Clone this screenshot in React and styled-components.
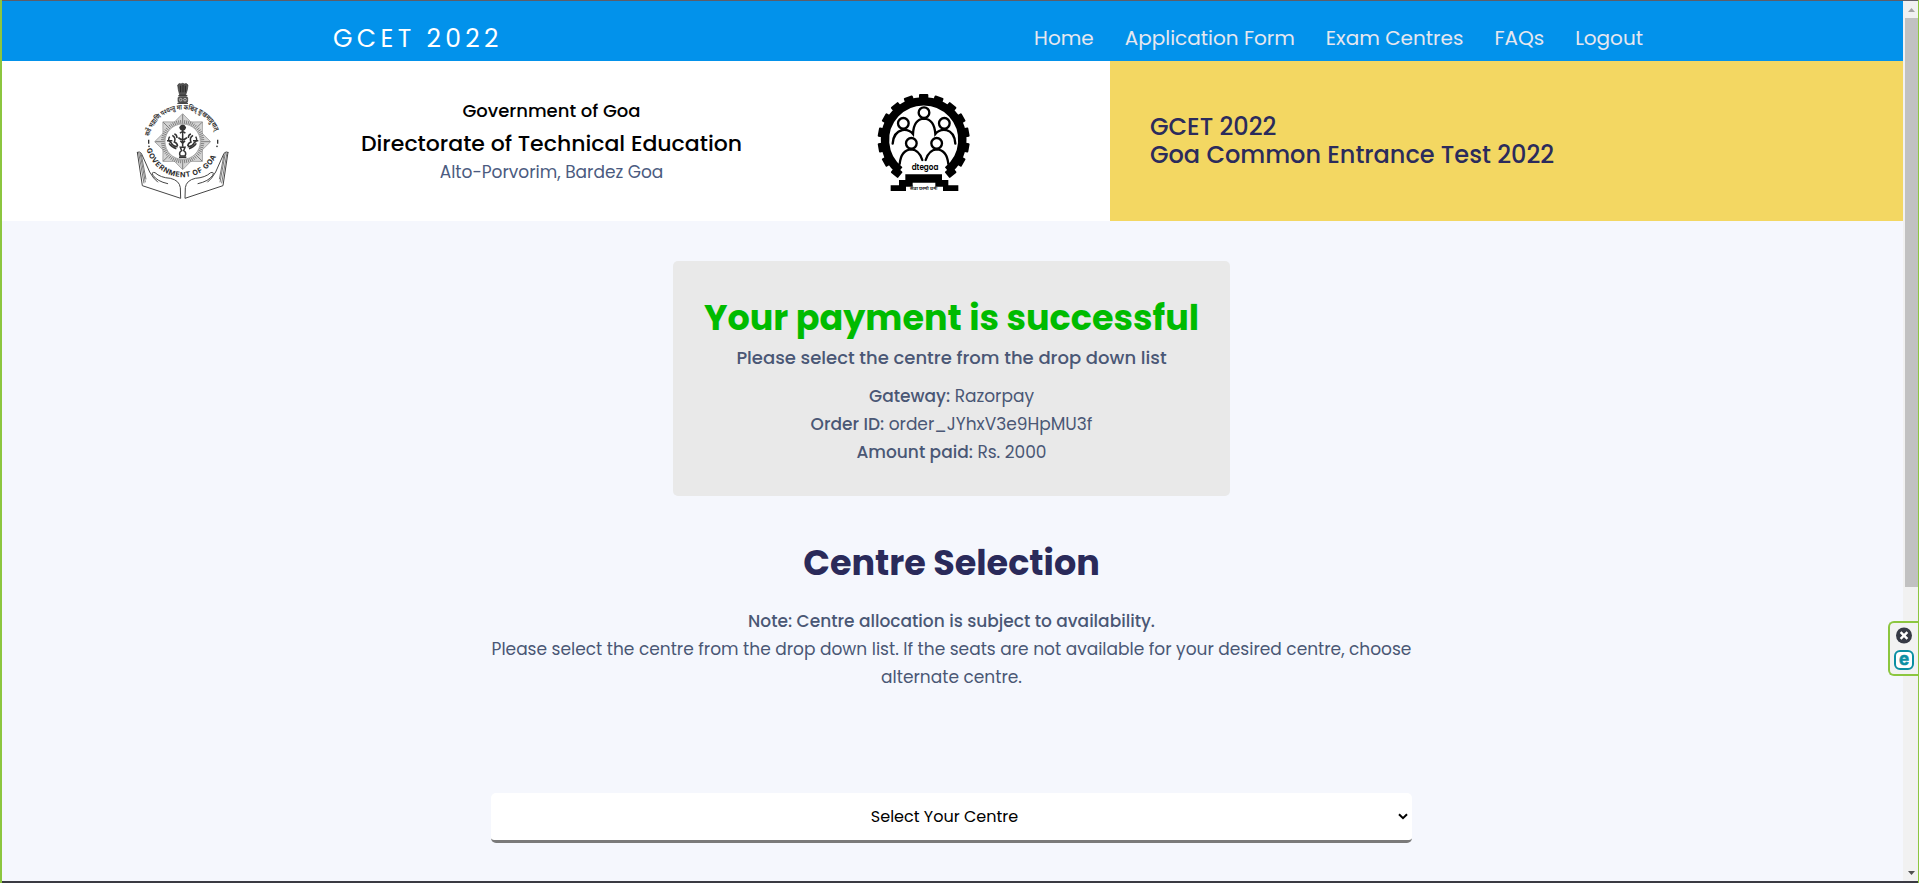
import React from 'react';
import styled, { createGlobalStyle } from 'styled-components';

const GlobalStyle = createGlobalStyle`
  *, *::before, *::after { box-sizing: border-box; }
  body {
    margin: 0;
    overflow: hidden;
    font-family: Poppins, Inter, 'Open Sans', sans-serif;
    color: #4a5775;
  }
  p, h1, h2 { margin: 0; }
`;

const Frame = styled.div`
  display: flex;
  width: 1919px;
  height: 883px;
  position: relative;
  border-left: 2px solid #8cc63f;
  border-right: 1px solid #8cc63f;
`;

const Page = styled.div`
  width: 1901px;
  border-top: 1px solid #5d5d68;
  border-bottom: 2px solid #3a3a42;
  background: #f5f7fd;
`;

const TopBar = styled.header`
  display: flex;
  align-items: flex-start;
  height: 60px;
  padding: 14px 260px 0 331px;
  background: #0292eb;
  line-height: 46px;
`;

const Brand = styled.div`
  flex: 1;
  padding-top: 1px;
  font-size: 25px;
  letter-spacing: 4.35px;
  color: #fff;
`;

const Nav = styled.nav`
  display: flex;
  gap: 31px;
`;

const NavLink = styled.a`
  font-size: 20px;
  color: #e6e7ef;
`;

const Banner = styled.div`
  display: grid;
  grid-template-columns: 1108px 1fr;
  height: 160px;
`;

const Department = styled.div`
  display: grid;
  grid-template-columns: 362px 375px 370px;
  justify-items: center;
  align-items: start;
  background: #fff;
`;

const LogoSlot = styled.div`
  padding-top: ${(p) => p.$top}px;
  line-height: 0;
`;

const DepartmentText = styled.div`
  display: flex;
  flex-direction: column;
  align-items: center;
  width: 375px;
  padding-top: 36px;
`;

const DepartmentLine = styled.p`
  font-size: ${(p) => p.$size}px;
  line-height: ${(p) => p.$line}px;
  font-weight: ${(p) => (p.$muted ? 400 : 500)};
  color: ${(p) => (p.$muted ? '#4b5b80' : '#000')};
  white-space: nowrap;
`;

const ExamTitle = styled.div`
  background: #f3d762;
  padding: 52px 0 0 40px;
  font-size: 24px;
  font-weight: 500;
  line-height: 28px;
  color: #2b2b5c;
`;

const Main = styled.main`
  display: flex;
  flex-direction: column;
  align-items: center;
  padding: 40px 2px 0 0;
`;

const PaymentCard = styled.section`
  display: flex;
  flex-direction: column;
  align-items: center;
  width: 557px;
  height: 235px;
  padding-top: 32px;
  border-radius: 5px;
  background: #e9e9e9;
`;

const CardTitle = styled.h1`
  font-size: 35px;
  line-height: 50px;
  font-weight: 700;
  color: #00bb00;
`;

const CardSubtitle = styled.p`
  margin: 0 0 9px;
  font-size: 18px;
  line-height: 30px;
  font-weight: 500;
`;

const TextRow = styled.p`
  font-size: 17px;
  line-height: 28px;
  text-align: center;
  white-space: nowrap;
`;

const Strong = styled.span`
  font-weight: 500;
`;

const SectionTitle = styled.h2`
  margin: 42px 0 19px;
  font-size: 35px;
  line-height: 50px;
  font-weight: 700;
  color: #2a2a5a;
`;

const Select = styled.button`
  display: flex;
  align-items: center;
  width: 921px;
  height: 50px;
  margin-top: 102px;
  padding: 0 4px 0 0;
  border: 0;
  border-bottom: 3px solid #7a7a7a;
  border-radius: 5px;
  background: #fff;
  font: inherit;
  font-size: 16px;
  color: #000;
`;

const SelectLabel = styled.span`
  flex: 1;
  text-align: center;
`;

const ScrollTrack = styled.div`
  display: flex;
  flex-direction: column;
  width: 15px;
  height: 883px;
  padding-left: 2px;
  border-top: 1px solid #5d5d68;
  border-bottom: 2px solid #3a3a42;
  background: #f1f1f1;
`;

const ScrollThumb = styled.div`
  height: 569px;
  background: #c1c1c1;
`;

const ScrollButton = styled.div`
  display: flex;
  justify-content: center;
  align-items: center;
  height: 17px;
`;

const ScrollSpace = styled.div`
  flex: 1;
`;

const Widget = styled.aside`
  position: absolute;
  right: 0;
  top: 621px;
  width: 30px;
  height: 55px;
  display: flex;
  flex-direction: column;
  align-items: center;
  padding: 4px 0 0;
  gap: 6px;
  border: 2px solid #8cc63f;
  border-right: 0;
  border-radius: 6px 0 0 6px;
  background: #f2f2f2;
`;

const WidgetBadge = styled.div`
  display: flex;
  justify-content: center;
  align-items: center;
  width: 20px;
  height: 20px;
  padding-bottom: 2px;
  border: 2px solid #0a8fa3;
  border-radius: 6px;
  background: #fff;
  color: #0a8fa3;
  font: 700 17px/12px Inter, sans-serif;
  -webkit-text-stroke: 0.6px #0a8fa3;
`;

const polar = (cx, cy, r, deg) => {
  const a = (deg * Math.PI) / 180;
  return [cx + r * Math.sin(a), cy - r * Math.cos(a)];
};

const STAR = Array.from({ length: 16 }, (_, i) =>
  polar(189, 215, i % 2 ? 64 : 84, i * 22.5).join(','),
).join(' ');
const RAYS = Array.from({ length: 64 }, (_, i) => i * 5.625);

function GoaEmblem() {
  return (
    <svg width="100" height="126.67" viewBox="40 30 300 380" fill="none" stroke="#333">
      <g fill="#555" stroke="#333" strokeWidth="2">
        <path d="M174 45q5-7 10-3q5-4 10 0q6-4 11 3l-2 14l-5 16h-18l-4-16z" />
        <rect x="175" y="80" width="29" height="18" rx="5" />
      </g>
      <path d="M183 47v20M190 45v22M197 47v20M176 77h27M173 100h32" strokeWidth="3" stroke="#222" />
      <circle cx="183" cy="89" r="4" stroke="#ddd" strokeWidth="2" />
      <circle cx="196" cy="89" r="4" stroke="#ddd" strokeWidth="2" />
      <defs>
        <path id="mottoArc" d="M89 199A103 103 0 0 1 290 199" />
        <path id="nameArc" d="M80 233A112 112 0 0 0 299 233" />
      </defs>
      <text fill="#333" stroke="none" fontSize="21" fontWeight="700" fontFamily="'Noto Sans Devanagari', 'Noto Sans', sans-serif">
        <textPath href="#mottoArc" textLength="262" lengthAdjust="spacingAndGlyphs">
          सर्वे भद्राणि पश्यन्तु मा कश्चिद् दुःखमाप्नुयात्
        </textPath>
      </text>
      <text fill="#2b2b2b" stroke="none" fontSize="21.5" fontWeight="700" fontFamily="Inter, sans-serif">
        <textPath href="#nameArc" startOffset="4" textLength="272">
          GOVERNMENT OF GOA
        </textPath>
      </text>
      <path d="M87 209v12M294 209v12" strokeWidth="4" />
      <circle cx="88" cy="229" r="2.5" fill="#333" stroke="none" />
      <circle cx="292" cy="229" r="2.5" fill="#333" stroke="none" />
      <polygon points={STAR} fill="#d4d4d4" stroke="#888" strokeWidth="2" />
      {RAYS.map((d) => {
        const [x1, y1] = polar(189, 215, 54, d);
        const [x2, y2] = polar(189, 215, d % 45 === 0 ? 82 : 65, d);
        return <line key={d} x1={x1} y1={y1} x2={x2} y2={y2} stroke="#555" strokeWidth="2" />;
      })}
      <circle cx="189" cy="215" r="53" fill="#fff" stroke="#888" strokeWidth="2" />
      <g strokeWidth="4.5">
        <path d="M189 180v50M181 190q8-10 16 0M176 203q13 12 26 0M182 212l7 8l7-8" />
        <path d="M150 200q-8 12 4 18q6 12 20 12M142 212h16M158 196q12 8 6 20q8 2 10 12M170 236q-14-4-22-16M164 192q8 2 8 12" />
        <path d="M228 200q8 12-4 18q-6 12-20 12M236 212h-16M220 196q-12 8-6 20q-8 2-10 12M208 236q14-4 22-16M214 192q-8 2-8 12" />
        <path d="M181 172q8-12 16 0q-2 8-8 8q-6 0-8-8z" fill="#333" />
        <path d="M182 232h14l-4 10q10 6 4 16h-14q-6-10 4-16z" />
        <path d="M178 262h22" strokeWidth="5" />
      </g>
      <g strokeWidth="3" strokeLinejoin="round" strokeLinecap="round" stroke="#444">
        <path d="M53 247l15 100l115 38l-1-32q-3-22-30-28q-30-2-46-17q-12-3-6 8q12 18 44 25" />
        <path d="M53 247q6-4 12 3l17 38q6 18 20 36l12 12" />
        <path d="M325 247l-15 100l-114 38l1-32q3-22 30-28q30-2 46-17q12-3 6 8q-12 18-44 25" />
        <path d="M325 247q-6-4-12 3l-17 38q-6 18-20 36l-12 12" />
      </g>
      <g strokeWidth="2.4" stroke="#555">
        <path d="M57 248l16 92M61 249l16 88M65 254l14 74M322 248l-16 92M317 249l-16 88M313 254l-14 74" />
      </g>
    </svg>
  );
}

const TEETH = Array.from({ length: 15 }, (_, i) => (i - 7) * 20);

function GearLogo() {
  const [sx, sy] = polar(192, 180, 116, -142);
  const [ex, ey] = polar(192, 180, 116, 142);
  return (
    <svg width="101.33" height="103.33" viewBox="40 30 304 310" fill="none" stroke="#000">
      <path d={`M${sx} ${sy}A116 116 0 1 1 ${ex} ${ey}`} strokeWidth="25" />
      {TEETH.map((d) => (
        <rect key={d} x="178" y="42" width="28" height="24" rx="3" fill="#000" stroke="none" transform={`rotate(${d} 192 180)`} />
      ))}
      <g strokeWidth="7" strokeLinecap="round">
        <circle cx="193" cy="98" r="16" />
        <circle cx="131" cy="130" r="16" />
        <circle cx="254" cy="130" r="16" />
        <circle cx="155" cy="190" r="16" />
        <circle cx="231" cy="190" r="16" />
        <path d="M99 191q2-34 29-41q20-3 32 12q2-44 33-46q31 2 34 46q12-15 32-12q26 7 28 41" />
        <path d="M120 252q4-42 35-44q24 2 33 32M198 240q9-30 33-32q31 2 35 44" />
      </g>
      <text x="196" y="270" fill="#000" stroke="none" fontSize="25" fontWeight="600" textAnchor="middle" textLength="80" lengthAdjust="spacingAndGlyphs" fontFamily="Poppins, Inter, sans-serif">
        dtegoa
      </text>
      <path
        fill="#000"
        stroke="none"
        d="M137 283H247V300H266V316H296V333H250V320H227V308H159V320H139V333H93V316H118V300H137Z"
      />
      <text x="192" y="331" fill="#222" stroke="none" fontSize="13" fontWeight="700" textAnchor="middle" textLength="82" lengthAdjust="spacingAndGlyphs" fontFamily="'Noto Sans Devanagari', 'Noto Sans', sans-serif">
        सेवा परमो धर्मः
      </text>
    </svg>
  );
}

const NAV = ['Home', 'Application Form', 'Exam Centres', 'FAQs', 'Logout'];

const DETAILS = [
  ['Gateway:', 'Razorpay'],
  ['Order ID:', 'order_JYhxV3e9HpMU3f'],
  ['Amount paid:', 'Rs. 2000'],
];

export default function App() {
  return (
    <Frame>
      <GlobalStyle />
      <Page>
        <TopBar>
          <Brand>GCET 2022</Brand>
          <Nav>
            {NAV.map((label) => (
              <NavLink key={label}>{label}</NavLink>
            ))}
          </Nav>
        </TopBar>
        <Banner>
          <Department>
            <LogoSlot $top={19}>
              <GoaEmblem />
            </LogoSlot>
            <DepartmentText>
              <DepartmentLine $size={18} $line={28}>Government of Goa</DepartmentLine>
              <DepartmentLine $size={22} $line={37}>Directorate of Technical Education</DepartmentLine>
              <DepartmentLine $size={17} $line={21} $muted>Alto-Porvorim, Bardez Goa</DepartmentLine>
            </DepartmentText>
            <LogoSlot $top={29}>
              <GearLogo />
            </LogoSlot>
          </Department>
          <ExamTitle>
            <div>GCET 2022</div>
            <div>Goa Common Entrance Test 2022</div>
          </ExamTitle>
        </Banner>
        <Main>
          <PaymentCard>
            <CardTitle>Your payment is successful</CardTitle>
            <CardSubtitle>Please select the centre from the drop down list</CardSubtitle>
            {DETAILS.map(([name, value]) => (
              <TextRow key={name}>
                <Strong>{name}</Strong> {value}
              </TextRow>
            ))}
          </PaymentCard>
          <SectionTitle>Centre Selection</SectionTitle>
          <TextRow>
            <Strong>Note: Centre allocation is subject to availability.</Strong>
          </TextRow>
          <TextRow>
            Please select the centre from the drop down list. If the seats are not available for your desired centre, choose
            <br />
            alternate centre.
          </TextRow>
          <Select type="button">
            <SelectLabel>Select Your Centre</SelectLabel>
            <svg width="10" height="7" viewBox="0 0 10 7" fill="none" stroke="#000" strokeWidth="2">
              <path d="M1 1.2l4 4l4-4" />
            </svg>
          </Select>
        </Main>
      </Page>
      <ScrollTrack>
        <ScrollButton>
          <svg width="7" height="4" viewBox="0 0 7 4"><path d="M0 4L3.5 0L7 4z" fill="#a3a3a3" /></svg>
        </ScrollButton>
        <ScrollThumb />
        <ScrollSpace />
        <ScrollButton>
          <svg width="7" height="4" viewBox="0 0 7 4"><path d="M0 0L3.5 4L7 0z" fill="#505050" /></svg>
        </ScrollButton>
      </ScrollTrack>
      <Widget>
        <svg width="16" height="17" viewBox="0 0 16 17">
          <circle cx="8" cy="8.5" r="8" fill="#363a45" />
          <path d="M4.6 5.1l6.8 6.8M11.4 5.1l-6.8 6.8" stroke="#fff" strokeWidth="2.4" />
        </svg>
        <WidgetBadge>e</WidgetBadge>
      </Widget>
    </Frame>
  );
}
